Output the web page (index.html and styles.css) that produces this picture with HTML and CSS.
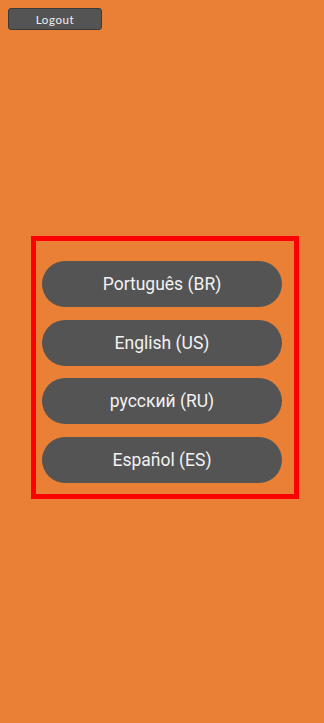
FILE: index.html
```html
<!DOCTYPE html>
<html>
<head>
<meta charset="utf-8">
<link rel="stylesheet" href="styles.css">
</head>
<body>
<div class="page">
  <div class="topbar">
    <button class="logout">Logout</button>
  </div>
  <div class="langbox">
    <button class="lang">Português (BR)</button>
    <button class="lang">English (US)</button>
    <button class="lang">русский (RU)</button>
    <button class="lang">Español (ES)</button>
  </div>
</div>
</body>
</html>
```
FILE: styles.css
```css
html, body {
  margin: 0;
  padding: 0;
  background: #e98035;
  height: 100%;
}
.page {
  display: flex;
  flex-direction: column;
  padding: 8px 0 0 0;
}
.topbar {
  display: flex;
  padding-left: 8px;
}
.logout {
  width: 94px;
  height: 22px;
  box-sizing: border-box;
  background: #545454;
  border: 1px solid #3a3a3a;
  border-radius: 3px;
  color: #f0f0f0;
  font-family: Lato, "Liberation Sans", sans-serif;
  font-size: 11.5px;
  letter-spacing: 0.6px;
  padding: 0;
  cursor: pointer;
}
.langbox {
  margin: 206px 0 0 31px;
  width: 268px;
  height: 263px;
  box-sizing: border-box;
  border: 5px solid #ff0000;
  padding: 20px 11px 11px 6px;
  display: flex;
  flex-direction: column;
  gap: 12.67px;
}
.lang {
  width: 240px;
  height: 46px;
  flex: 0 0 46px;
  background: #545454;
  border: none;
  border-radius: 23px;
  color: #f2f2f2;
  font-family: Roboto, "Liberation Sans", sans-serif;
  font-size: 17.5px;
  padding: 0;
}
```
